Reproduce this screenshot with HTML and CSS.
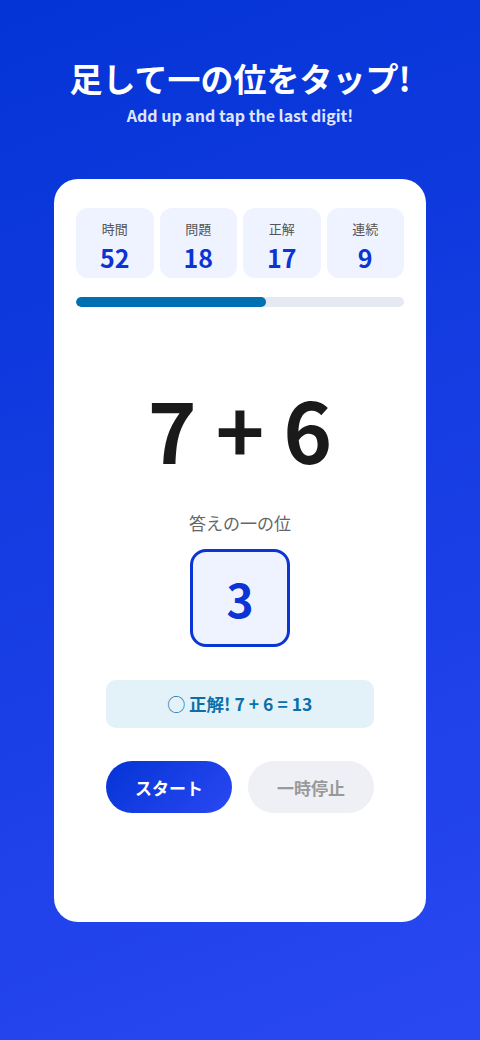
FILE: index.html
```html
<!DOCTYPE html>
<html lang="ja">
<head>
    <meta charset="utf-8">
    <title>一の位タップ</title>
    <link rel="stylesheet" href="styles.css">
</head>
<body>

    <div id="main_wrap">

        <header class="head">
            <h1 class="head-title">足して一の位をタップ!</h1>
            <p class="head-sub">Add up and tap the last digit!</p>
        </header>

        <div class="card">

            <div class="stats">
                <div class="stat">
                    <span class="stat-label">時間</span>
                    <span class="stat-value">52</span>
                </div>
                <div class="stat">
                    <span class="stat-label">問題</span>
                    <span class="stat-value">18</span>
                </div>
                <div class="stat">
                    <span class="stat-label">正解</span>
                    <span class="stat-value">17</span>
                </div>
                <div class="stat">
                    <span class="stat-label">連続</span>
                    <span class="stat-value">9</span>
                </div>
            </div>

            <div class="progress">
                <div class="progress-fill" style="width: 57.8%"></div>
            </div>

            <div class="problem">7 + 6</div>

            <div class="answer-label">答えの一の位</div>
            <div class="answer-box">3</div>

            <div class="feedback">◯ 正解! 7 + 6 = 13</div>

            <div class="buttons">
                <button class="btn start" type="button">スタート</button>
                <button class="btn pause" type="button">一時停止</button>
            </div>

        </div>

    </div>

</body>
</html>
```

FILE: styles.css
```css
* {
    margin: 0;
    padding: 0;
    box-sizing: border-box;
}

html,
body {
    height: 100%;
}

body {
    font-family: "Noto Sans CJK JP", "Noto Sans", sans-serif;
    background: linear-gradient(160deg, #0434d6 0%, #1a3fe6 60%, #2a48f2 100%);
    color: #1a1a1a;
}

#main_wrap {
    display: flex;
    flex-direction: column;
    align-items: center;
    padding: 56px 54px 0;
}



.head {
    text-align: center;
    color: #fff;
}

.head-title {
    font-size: 33px;
    font-weight: 700;
    line-height: 44px;
}

.head-sub {
    margin-top: 4px;
    font-size: 16px;
    font-weight: 700;
    line-height: 22px;
    color: #dfe5ff;
}



.card {
    display: flex;
    flex-direction: column;
    align-items: center;
    width: 372px;
    height: 743px;
    margin-top: 53px;
    padding: 29px 22px;
    background: #fff;
    border-radius: 24px;
}

.stats {
    display: grid;
    grid-template-columns: repeat(4, 1fr);
    gap: 6px;
    width: 100%;
}

.stat {
    display: flex;
    flex-direction: column;
    align-items: center;
    height: 70px;
    padding-top: 12px;
    background: #eef3ff;
    border-radius: 12px;
}

.stat-label {
    font-size: 13px;
    line-height: 18px;
    color: #555;
}

.stat-value {
    margin-top: 3px;
    font-size: 25px;
    font-weight: 700;
    line-height: 32px;
    color: #0b34d4;
}

.progress {
    width: 100%;
    height: 10px;
    margin-top: 19px;
    background: #e4e9f2;
    border-radius: 5px;
    overflow: hidden;
}

.progress-fill {
    height: 100%;
    background: #0070b2;
    border-radius: 5px;
}

.problem {
    margin-top: 61px;
    font-size: 83px;
    font-weight: 700;
    line-height: 120px;
    color: #1a1a1a;
}

.answer-label {
    margin-top: 23px;
    font-size: 17px;
    line-height: 24px;
    color: #666;
}

.answer-box {
    display: flex;
    align-items: center;
    justify-content: center;
    width: 100px;
    height: 98px;
    margin-top: 14px;
    font-size: 46px;
    font-weight: 700;
    color: #0b34d4;
    background: #eef3ff;
    border: 3px solid #0b34d4;
    border-radius: 16px;
}

.feedback {
    width: 268px;
    height: 48px;
    margin-top: 33px;
    font-size: 17.5px;
    font-weight: 700;
    line-height: 48px;
    text-align: center;
    color: #0a6fa8;
    background: #e3f1f9;
    border-radius: 10px;
}

.buttons {
    display: flex;
    gap: 16px;
    margin-top: 33px;
}

.btn {
    width: 126px;
    height: 52px;
    font-family: inherit;
    font-size: 17px;
    font-weight: 700;
    border: none;
    border-radius: 26px;
}

.btn.start {
    color: #fff;
    background: linear-gradient(135deg, #0434d6, #2a48f2);
}

.btn.pause {
    color: #999;
    background: #eef0f5;
}
```
